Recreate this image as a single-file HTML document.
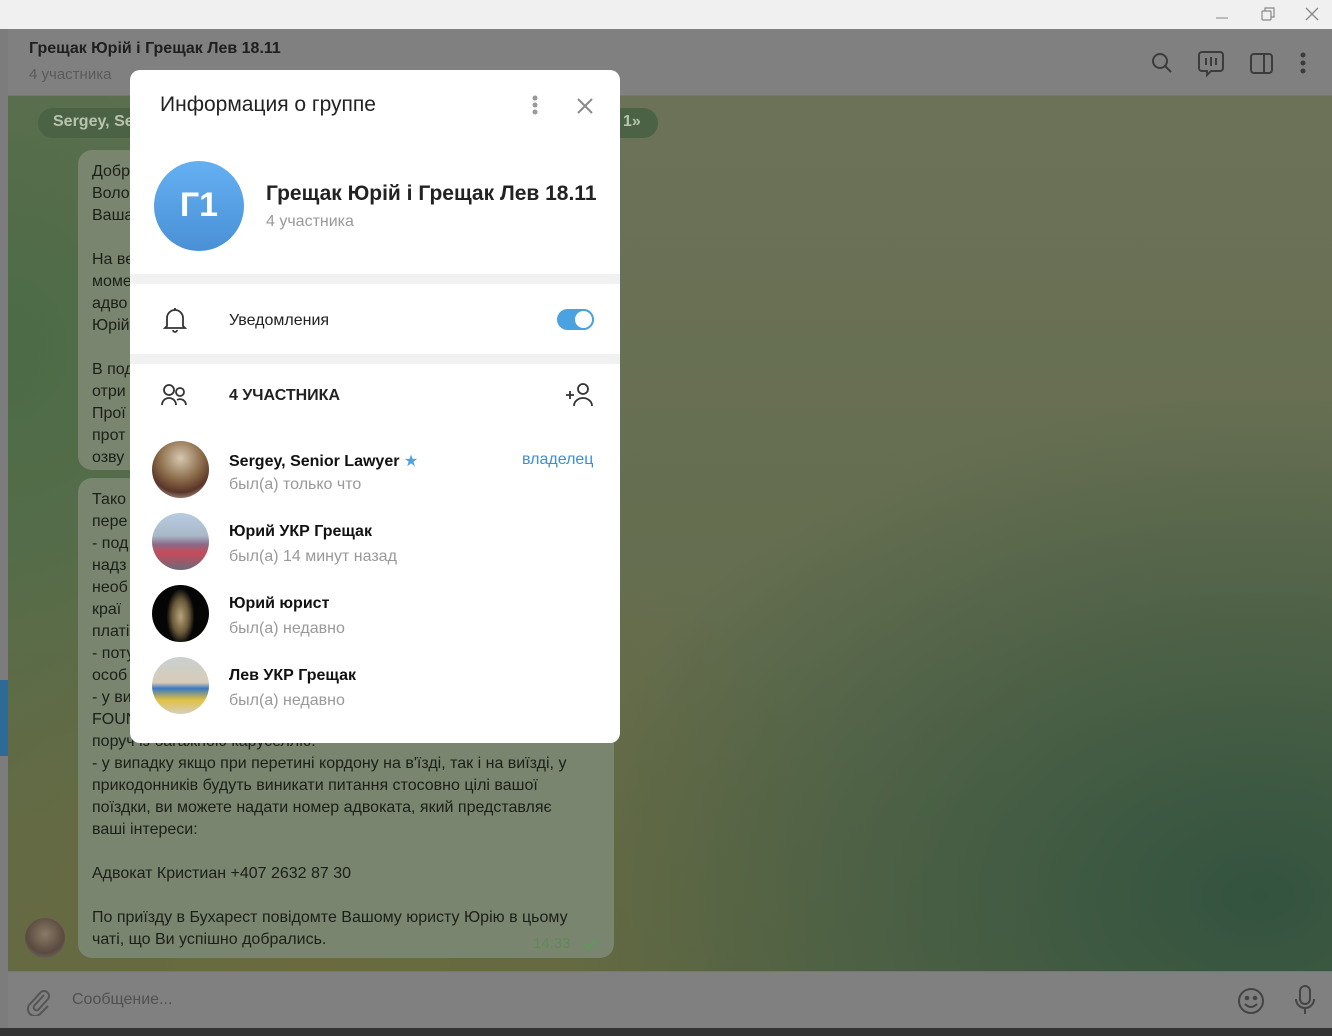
<!DOCTYPE html>
<html><head><meta charset="utf-8"><style>
*{margin:0;padding:0;box-sizing:border-box}
body{width:1332px;height:1036px;overflow:hidden;position:relative;font-family:"Liberation Sans","DejaVu Sans",sans-serif;background:#808080}
.tb{position:absolute;left:0;top:0;width:1332px;height:29px;background:#f0f0f0}
.side{position:absolute;left:0;top:29px;width:8px;height:999px;background:#7c7c7c}
.hdr{position:absolute;left:8px;top:29px;width:1324px;height:67px;background:#808080;border-bottom:1px solid #767676}
.chat{position:absolute;left:8px;top:96px;width:1324px;height:875px;overflow:hidden;
background:
radial-gradient(ellipse 700px 500px at 1250px 800px,#33533f 0%,rgba(51,83,63,0) 100%),
radial-gradient(ellipse 600px 450px at 300px 850px,#6a6a3e 0%,rgba(106,106,62,0) 100%),
radial-gradient(ellipse 500px 600px at 0px 250px,#4c6b46 0%,rgba(76,107,70,0) 100%),
linear-gradient(180deg,#6c7258,#5f6a48)}
.bub{position:absolute;background:#7a8570;border-radius:14px;color:#1b1f18;font-size:16px;line-height:22px;padding:0 14px}
.inp{position:absolute;left:8px;top:971px;width:1324px;height:57px;background:#808080;border-top:1px solid #777}
.bot{position:absolute;left:0;top:1028px;width:1332px;height:8px;background:#333}
.modal{position:absolute;left:130px;top:70px;width:490px;height:673px;background:#fff;border-radius:10px;overflow:hidden}
.sep{position:absolute;left:0;width:490px;height:10px;background:#f1f1f1}
.t{position:absolute;white-space:nowrap}
.av{position:absolute;left:22px;width:57px;height:57px;border-radius:50%;overflow:hidden}
.nm{position:absolute;left:99px;font-size:16px;color:#111;font-weight:bold}
.st{position:absolute;left:99px;font-size:16px;color:#999}
</style></head><body>
<div class="tb">
<svg style="position:absolute;left:1215px;top:10px" width="14" height="10"><path d="M1 8h12" stroke="#999" stroke-width="1.2"/></svg>
<svg style="position:absolute;left:1260px;top:6px" width="16" height="16"><rect x="2" y="5" width="9" height="9" fill="none" stroke="#888" stroke-width="1.2" rx="1"/><path d="M5 5V2h9v9h-3" fill="none" stroke="#888" stroke-width="1.2"/></svg>
<svg style="position:absolute;left:1304px;top:6px" width="16" height="16"><path d="M2 2l12 12M14 2L2 14" stroke="#888" stroke-width="1.3"/></svg>
</div>
<div class="side"></div>
<div style="position:absolute;left:0;top:680px;width:8px;height:76px;background:#2d6a96"></div>
<div class="hdr">
<div class="t" style="left:21px;top:11px;font-size:16px;font-weight:bold;color:#1e1e1e">Грещак Юрій і Грещак Лев 18.11</div>
<div class="t" style="left:21px;top:37px;font-size:15px;color:#5a5a5a">4 участника</div>
<svg style="position:absolute;left:1142px;top:22px" width="26" height="26" fill="none" stroke="#3c3c3c" stroke-width="2"><circle cx="10" cy="10" r="7"/><path d="M15 15l6 6"/></svg>
<svg style="position:absolute;left:1189px;top:20px" width="28" height="30" fill="none" stroke="#3c3c3c" stroke-width="2"><path d="M5 3h18a3 3 0 0 1 3 3v13a3 3 0 0 1-3 3h-9l-4 4v-4H5a3 3 0 0 1-3-3V6a3 3 0 0 1 3-3z"/><path d="M9 9v7M14 8v9M19 9v7"/></svg>
<svg style="position:absolute;left:1241px;top:22px" width="26" height="26" fill="none" stroke="#3c3c3c" stroke-width="2"><rect x="2" y="3" width="21" height="19" rx="3"/><path d="M15 3v19"/></svg>
<svg style="position:absolute;left:1290px;top:22px" width="10" height="26" fill="#3c3c3c"><circle cx="5" cy="4" r="2.5"/><circle cx="5" cy="12" r="2.5"/><circle cx="5" cy="20" r="2.5"/></svg>
</div>
<div class="chat">
<div style="position:absolute;left:30px;top:12px;width:620px;height:30px;border-radius:15px;background:#4b6344"></div>
<div class="t" style="left:45px;top:17px;color:#b8c3b0;font-size:16px;font-weight:bold">Sergey, Se</div>
<div class="t" style="left:615px;top:17px;color:#b8c3b0;font-size:16px;font-weight:bold">1»</div>
<div class="bub" style="left:70px;top:54px;width:536px;height:320px;padding-top:11px">Добр<br>Воло<br>Ваша<br><br>На ве<br>моме<br>адво<br>Юрій<br><br>В под<br>отри<br>Прої<br>прот<br>озву</div>
<div class="bub" style="left:70px;top:382px;width:536px;height:480px;padding-top:11px">Тако<br>пере<br>- под<br>надз<br>необ<br>краї<br>платі<br>- поту<br>особ<br>- у ви<br>FOUN<br>поруч із багажною каруселлю.<br>- у випадку якщо при перетині кордону на в'їзді, так і на виїзді, у<br>прикодонників будуть виникати питання стосовно цілі вашої<br>поїздки, ви можете надати номер адвоката, який представляє<br>ваші інтереси:<br><br>Адвокат Кристиан +407 2632 87 30<br><br>По приїзду в Бухарест повідомте Вашому юристу Юрію в цьому<br>чаті, що Ви успішно добрались.</div>
<div class="t" style="left:525px;top:839px;font-size:15px;color:#5e8a56">14:33</div>
<svg style="position:absolute;left:574px;top:840px" width="18" height="16"><path d="M2 8l4 4 9-9" fill="none" stroke="#5e9a56" stroke-width="2"/></svg>
<div style="position:absolute;left:17px;top:822px;width:40px;height:40px;border-radius:50%;background:radial-gradient(circle at 50% 40%,#8a7a66,#5a4a40 60%,#7a7a7a)"></div>
</div>
<div class="inp">
<svg style="position:absolute;left:16px;top:14px" width="28" height="30" fill="none" stroke="#555" stroke-width="2"><path d="M20 9L10 20a3 3 0 0 0 4 4l10-11a5 5 0 0 0-7-7L6 18a7 7 0 0 0 10 10l8-8"/></svg>
<div class="t" style="left:64px;top:19px;font-size:16px;color:#505050">Сообщение...</div>
<svg style="position:absolute;left:1228px;top:14px" width="30" height="30" fill="none" stroke="#444" stroke-width="2"><circle cx="15" cy="15" r="12"/><circle cx="11" cy="12" r="1.3" fill="#444"/><circle cx="19" cy="12" r="1.3" fill="#444"/><path d="M9 18q6 6 12 0"/></svg>
<svg style="position:absolute;left:1284px;top:12px" width="26" height="32" fill="none" stroke="#444" stroke-width="2"><rect x="8" y="2" width="10" height="18" rx="5"/><path d="M4 15a9 9 0 0 0 18 0M13 24v6"/></svg>
</div>
<div class="bot"></div>

<div class="modal">
<div class="t" style="left:30px;top:23px;font-size:21px;color:#222">Информация о группе</div>
<svg style="position:absolute;left:400px;top:24px" width="10" height="24" fill="#999"><circle cx="5" cy="4" r="2.5"/><circle cx="5" cy="11" r="2.5"/><circle cx="5" cy="18" r="2.5"/></svg>
<svg style="position:absolute;left:445px;top:26px" width="20" height="20"><path d="M3 3l14 14M17 3L3 17" stroke="#8a8a8a" stroke-width="2"/></svg>
<div style="position:absolute;left:24px;top:91px;width:90px;height:90px;border-radius:50%;background:linear-gradient(180deg,#64b0f2,#4a90d6)"></div>
<div class="t" style="left:24px;top:116px;width:90px;text-align:center;font-size:34px;color:#fff;font-weight:bold">Г1</div>
<div class="t" style="left:136px;top:112px;font-size:21px;color:#222;font-weight:bold">Грещак Юрій і Грещак Лев 18.11</div>
<div class="t" style="left:136px;top:143px;font-size:16px;color:#999">4 участника</div>
<div class="sep" style="top:204px"></div>
<svg style="position:absolute;left:32px;top:236px" width="26" height="28" fill="none" stroke="#333" stroke-width="1.8"><path d="M5 20V12a8 8 0 0 1 16 0v8l2 2H3z"/><path d="M11 24a2 2 0 0 0 4 0M13 2v2"/></svg>
<div class="t" style="left:99px;top:242px;font-size:16px;color:#222">Уведомления</div>
<div style="position:absolute;left:427px;top:239px;width:37px;height:21px;border-radius:11px;background:#4aa3e0"></div>
<div style="position:absolute;left:443px;top:239px;width:21px;height:21px;border-radius:50%;background:#fff;border:2px solid #4aa3e0"></div>
<div class="sep" style="top:284px"></div>
<svg style="position:absolute;left:30px;top:312px" width="30" height="26" fill="none" stroke="#333" stroke-width="1.8"><circle cx="9" cy="8" r="5"/><circle cx="20" cy="10" r="4"/><path d="M2 23a7 7 0 0 1 14 0M17 18a6 6 0 0 1 9 5"/></svg>
<div class="t" style="left:99px;top:317px;font-size:16px;color:#222;font-weight:bold">4 УЧАСТНИКА</div>
<svg style="position:absolute;left:434px;top:311px" width="32" height="28" fill="none" stroke="#333" stroke-width="1.8"><circle cx="19" cy="8" r="5"/><path d="M10 25a9 8 0 0 1 18 0M2 14h8M6 10v8"/></svg>

<div class="av" style="top:371px;background:radial-gradient(circle at 50% 30%,#d6c8b0,#8a6a48 45%,#5a3428 70%,#e8e4e0)"></div>
<div class="nm" style="top:381px">Sergey, Senior Lawyer <span style="color:#4aa3e0">★</span></div>
<div class="t" style="left:392px;top:381px;font-size:16px;color:#3a8fd8">владелец</div>
<div class="st" style="top:406px">был(а) только что</div>

<div class="av" style="top:443px;background:linear-gradient(180deg,#b8cce0 0%,#a8b8c8 40%,#8a6a88 55%,#c84a5a 70%,#6a6a7a 100%)"></div>
<div class="nm" style="top:453px">Юрий УКР Грещак</div>
<div class="st" style="top:478px">был(а) 14 минут назад</div>

<div class="av" style="top:515px;background:radial-gradient(ellipse 14px 28px at 50% 55%,#b8a47a,#6a5a3a 60%,#050505 100%)"></div>
<div class="nm" style="top:525px">Юрий юрист</div>
<div class="st" style="top:550px">был(а) недавно</div>

<div class="av" style="top:587px;background:linear-gradient(180deg,#c8d0d0 0%,#d8ccb8 45%,#3a78c0 55%,#e0c040 75%,#d8cfc0 100%)"></div>
<div class="nm" style="top:597px">Лев УКР Грещак</div>
<div class="st" style="top:622px">был(а) недавно</div>
</div>
</body></html>
